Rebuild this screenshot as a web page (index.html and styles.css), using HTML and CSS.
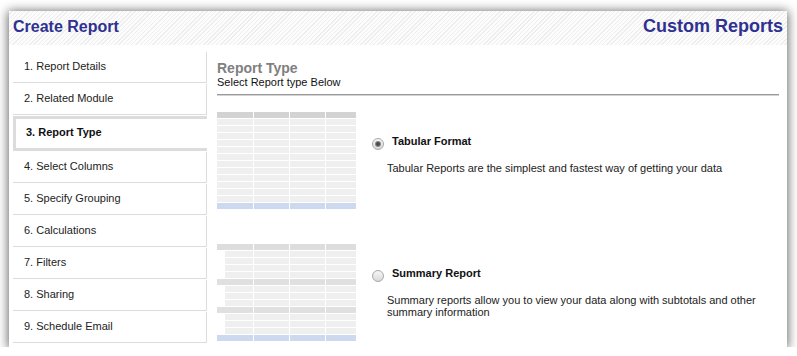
FILE: index.html
```html
<!DOCTYPE html>
<html>
<head>
<meta charset="utf-8">
<link rel="stylesheet" href="styles.css">
</head>
<body>
<div class="panel">
  <div class="hdr">
    <div class="title">Create Report</div>
    <div class="title big">Custom Reports</div>
  </div>
  <div class="main">
    <ul class="steps">
      <li class="step">1. Report Details</li>
      <li class="step">2. Related Module</li>
      <li class="step active">3. Report Type</li>
      <li class="step">4. Select Columns</li>
      <li class="step">5. Specify Grouping</li>
      <li class="step">6. Calculations</li>
      <li class="step">7. Filters</li>
      <li class="step">8. Sharing</li>
      <li class="step">9. Schedule Email</li>
    </ul>
    <div class="content">
      <div class="heading">Report Type</div>
      <div class="subheading">Select Report type Below</div>
      <div class="rule"></div>

      <div class="option first">
        <div class="tbl tabular">
          <div class="row head"><i></i><i></i><i></i><i></i></div>
          <div class="row"><i></i><i></i><i></i><i></i></div>
          <div class="row"><i></i><i></i><i></i><i></i></div>
          <div class="row"><i></i><i></i><i></i><i></i></div>
          <div class="row"><i></i><i></i><i></i><i></i></div>
          <div class="row"><i></i><i></i><i></i><i></i></div>
          <div class="row"><i></i><i></i><i></i><i></i></div>
          <div class="row"><i></i><i></i><i></i><i></i></div>
          <div class="row"><i></i><i></i><i></i><i></i></div>
          <div class="row"><i></i><i></i><i></i><i></i></div>
          <div class="row"><i></i><i></i><i></i><i></i></div>
          <div class="row"><i></i><i></i><i></i><i></i></div>
          <div class="row"><i></i><i></i><i></i><i></i></div>
          <div class="row foot"><i></i><i></i><i></i><i></i></div>
        </div>
        <div class="choice">
          <div class="choice-title"><span class="radio checked"><span class="dot"></span></span><span class="label">Tabular Format</span></div>
          <div class="desc">Tabular Reports are the simplest and fastest way of getting your data</div>
        </div>
      </div>

      <div class="option second">
        <div class="tbl summary">
          <div class="row head"><i></i><i></i><i></i><i></i></div>
          <div class="row sub"><i></i><i></i><i></i><i></i></div>
          <div class="row sub"><i></i><i></i><i></i><i></i></div>
          <div class="row sub"><i></i><i></i><i></i><i></i></div>
          <div class="row sub"><i></i><i></i><i></i><i></i></div>
          <div class="row group"><i></i><i></i><i></i><i></i></div>
          <div class="row sub"><i></i><i></i><i></i><i></i></div>
          <div class="row sub"><i></i><i></i><i></i><i></i></div>
          <div class="row sub"><i></i><i></i><i></i><i></i></div>
          <div class="row group"><i></i><i></i><i></i><i></i></div>
          <div class="row sub"><i></i><i></i><i></i><i></i></div>
          <div class="row sub"><i></i><i></i><i></i><i></i></div>
          <div class="row sub"><i></i><i></i><i></i><i></i></div>
          <div class="row foot"><i></i><i></i><i></i><i></i></div>
        </div>
        <div class="choice">
          <div class="choice-title"><span class="radio"></span><span class="label">Summary Report</span></div>
          <div class="desc">Summary reports allow you to view your data along with subtotals and other summary information</div>
        </div>
      </div>
    </div>
  </div>
</div>
</body>
</html>
```

FILE: styles.css
```css
html, body {
  margin: 0;
  padding: 0;
  background: #fff;
}
body {
  font-family: "Liberation Sans", Arial, sans-serif;
  font-size: 11px;
  color: #222;
  padding-top: 11px;
}
.panel {
  margin-left: 9px;
  width: 778px;
  height: 336px;
  background: #fff;
  box-shadow: 0 1px 10px 1px rgba(0, 0, 0, 0.6);
}
.hdr {
  height: 34px;
  box-sizing: border-box;
  padding: 5px 4px 0 4px;
  display: flex;
  justify-content: space-between;
  align-items: baseline;
  background: repeating-linear-gradient(135deg, #fcfcfc 0, #fcfcfc 2px, #eeeeee 2px, #eeeeee 3px);
}
.title {
  font-size: 16px;
  font-weight: bold;
  line-height: 21px;
  color: #2f3191;
}
.title.big {
  font-size: 18px;
}
.main {
  display: flex;
  margin-top: 7px;
}
.steps {
  list-style: none;
  margin: 0 0 0 4px;
  padding: 0;
  width: 194px;
  flex: none;
}
.step {
  box-sizing: border-box;
  height: 31px;
  padding: 8px 0 0 11px;
  line-height: 13px;
  border-bottom: 1px solid #dcdcdc;
  border-right: 1px solid #dcdcdc;
  margin-bottom: 1px;
  color: #222;
}
.step.active {
  height: 35px;
  border: 3px solid #dcdcdc;
  border-right: none;
  padding: 7px 0 0 10px;
  font-weight: bold;
  color: #111;
}
.content {
  flex: 1;
  padding: 8px 8px 0 10px;
}
.heading {
  font-size: 14px;
  font-weight: bold;
  line-height: 16px;
  color: #808080;
}
.subheading {
  line-height: 12px;
  color: #111;
}
.rule {
  margin-top: 6px;
  border-top: 1px solid #9a9a9a;
  height: 1px;
  background: #d4d4d4;
}
.option {
  display: flex;
  align-items: center;
}
.option.first {
  margin-top: 16px;
}
.option.second {
  margin-top: 35px;
}
.tbl {
  width: 139px;
  flex: none;
  display: flex;
  flex-direction: column;
  gap: 1px;
}
.row {
  display: flex;
  gap: 1px;
  height: 6px;
}
.row i {
  display: block;
  height: 6px;
  background: #efefef;
}
.row i:nth-child(1) { width: 36px; }
.row i:nth-child(2) { width: 35px; }
.row i:nth-child(3) { width: 35px; }
.row i:nth-child(4) { width: 30px; }
.tabular .row.head i { background: #d3d3d3; }
.summary .row.head i { background: #dddddd; }
.row.group i { background: #e0e0e0; }
.row.sub i:nth-child(1) { width: 28px; margin-left: 8px; }
.row.foot i { background: #cdd9ef; }
.choice {
  padding-left: 16px;
  flex: 1;
}
.choice-title {
  display: flex;
  align-items: flex-start;
  line-height: 13px;
}
.radio {
  box-sizing: border-box;
  width: 12px;
  height: 12px;
  margin-top: 3px;
  border-radius: 50%;
  border: 1px solid #a9a9a9;
  background: linear-gradient(#f6f6f6, #d9d9d9);
  display: flex;
  align-items: center;
  justify-content: center;
  flex: none;
}
.radio .dot {
  width: 4px;
  height: 4px;
  border-radius: 50%;
  background: #4b4b4b;
  box-shadow: 0 0 0 1px #8a8a8a;
}
.label {
  margin-left: 8px;
  font-weight: bold;
  color: #111;
}
.desc {
  margin-top: 12px;
  padding-left: 15px;
  line-height: 12px;
  min-height: 24px;
  color: #222;
}
```
